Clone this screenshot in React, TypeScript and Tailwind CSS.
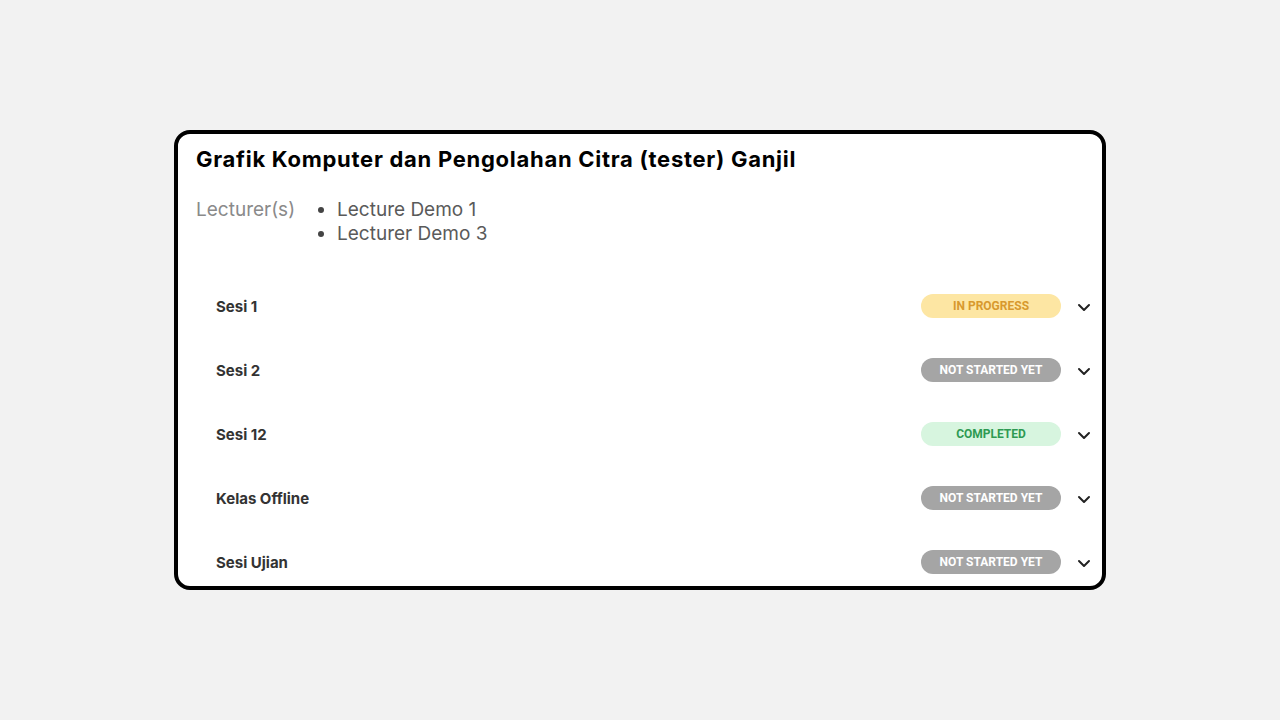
import React from "react";

type Status = "progress" | "not" | "done";

const rows: { label: string; status: Status }[] = [
  { label: "Sesi 1", status: "progress" },
  { label: "Sesi 2", status: "not" },
  { label: "Sesi 12", status: "done" },
  { label: "Kelas Offline", status: "not" },
  { label: "Sesi Ujian", status: "not" },
];

const badgeFont = { fontFamily: "Roboto, 'Liberation Sans', sans-serif" };

function Badge({ status }: { status: Status }) {
  if (status === "progress")
    return (
      <span style={badgeFont} className="flex h-[24px] w-[140px] items-center justify-center rounded-full bg-[#fde6a3] text-[12px] font-bold text-[#d8992e]">
        IN PROGRESS
      </span>
    );
  if (status === "done")
    return (
      <span style={badgeFont} className="flex h-[24px] w-[140px] items-center justify-center rounded-full bg-[#d7f5df] text-[12px] font-bold text-[#2e9a52]">
        COMPLETED
      </span>
    );
  return (
    <span style={badgeFont} className="flex h-[24px] w-[140px] items-center justify-center rounded-full bg-[#a5a5a5] text-[12px] font-bold text-white">
      NOT STARTED YET
    </span>
  );
}

function Chevron() {
  return (
    <svg width="14" height="14" viewBox="0 0 14 14" className="text-[#222]">
      <polyline points="2,5 7,10 12,5" fill="none" stroke="currentColor" strokeWidth="2" strokeLinecap="round" strokeLinejoin="round" />
    </svg>
  );
}

export default function App() {
  return (
    <div
      className="flex min-h-[720px] w-full items-start justify-center bg-[#f2f2f2] pt-[130px]"
      style={{ fontFamily: "Inter, 'Noto Sans', sans-serif" }}
    >
      <div className="h-[460px] w-[932px] overflow-hidden rounded-[16px] border-[4px] border-black bg-white">
        <div className="px-[18px] pt-[11px]">
          <h1 className="text-[22px] font-bold leading-[28px] tracking-[0.72px] text-black">
            Grafik Komputer dan Pengolahan Citra (tester) Ganjil
          </h1>
          <div className="mt-[25px] flex text-[19px] leading-[24px]">
            <div className="w-[120px] text-[#8a8a8a]">Lecturer(s)</div>
            <ul className="list-disc pl-[21px] text-[#5a5a5a] marker:text-[#444]">
              <li>Lecture Demo 1</li>
              <li>Lecturer Demo 3</li>
            </ul>
          </div>
        </div>
        <div className="mt-[28px]">
          {rows.map((r) => (
            <div key={r.label} className="flex h-[64px] items-center pl-[38px] pr-[10px]">
              <div className="flex-1 pt-[2px] text-[15px] font-bold text-[#333]">{r.label}</div>
              <Badge status={r.status} />
              <div className="ml-[15px] flex w-[16px] items-center justify-center pt-[2px]">
                <Chevron />
              </div>
            </div>
          ))}
        </div>
      </div>
    </div>
  );
}
